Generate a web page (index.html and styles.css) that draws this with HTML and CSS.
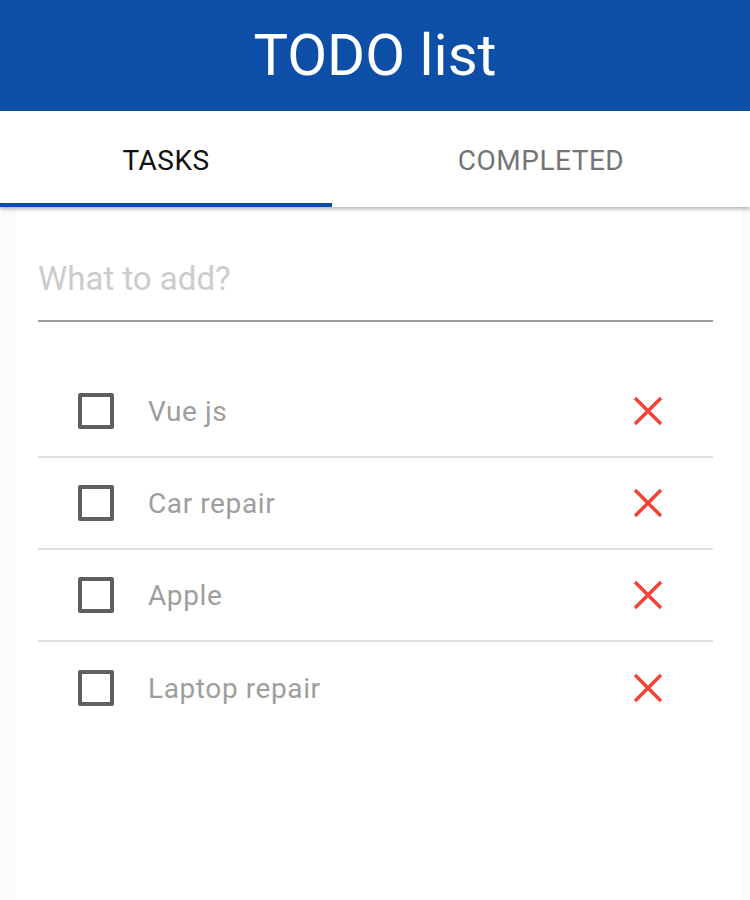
FILE: index.html
```html
<!DOCTYPE html>
<html>
<head>
<meta charset="utf-8">
<link rel="stylesheet" href="styles.css">
</head>
<body>
<header class="header"><h1 class="title">TODO list</h1></header>
<nav class="tabs">
  <div class="tab tab-active">TASKS</div>
  <div class="tab tab-rest">COMPLETED</div>
</nav>
<main class="content">
  <div class="input-wrap"><input class="new-task" type="text" placeholder="What to add?"></div>
  <ul class="list">
    <li class="item"><span class="check"></span><span class="label">Vue js</span><span class="del"><svg viewBox="0 0 32 32" width="32" height="32"><path d="M3 3L29 29M29 3L3 29" stroke="#f44336" stroke-width="3.5" fill="none"/></svg></span></li>
    <li class="item"><span class="check"></span><span class="label">Car repair</span><span class="del"><svg viewBox="0 0 32 32" width="32" height="32"><path d="M3 3L29 29M29 3L3 29" stroke="#f44336" stroke-width="3.5" fill="none"/></svg></span></li>
    <li class="item"><span class="check"></span><span class="label">Apple</span><span class="del"><svg viewBox="0 0 32 32" width="32" height="32"><path d="M3 3L29 29M29 3L3 29" stroke="#f44336" stroke-width="3.5" fill="none"/></svg></span></li>
    <li class="item"><span class="check"></span><span class="label">Laptop repair</span><span class="del"><svg viewBox="0 0 32 32" width="32" height="32"><path d="M3 3L29 29M29 3L3 29" stroke="#f44336" stroke-width="3.5" fill="none"/></svg></span></li>
  </ul>
</main>
</body>
</html>
```
FILE: styles.css
```css
html, body { margin: 0; padding: 0; }
body {
  font-family: Roboto, "Liberation Sans", Arial, sans-serif;
  background: #fbfbfb;
  width: 750px;
  height: 900px;
  overflow: hidden;
}
.header {
  height: 111px;
  background: #0d4ea6;
  display: flex;
  align-items: center;
  justify-content: center;
}
.title {
  margin: 0;
  color: #fff;
  font-weight: 400;
  font-size: 58px;
  line-height: 1;
  padding-bottom: 2px;
}
.tabs {
  height: 96px;
  background: #fff;
  display: flex;
  box-shadow: 0 2px 4px rgba(0,0,0,0.3);
  position: relative;
  z-index: 1;
}
.tab {
  display: flex;
  align-items: center;
  justify-content: center;
  font-size: 28px;
  letter-spacing: 0.5px;
  color: #757575;
  box-sizing: border-box;
  padding-top: 2px;
}
.tab-active {
  width: 332px;
  color: #111;
  border-bottom: 4px solid #0d4ea6;
  padding-top: 6px;
}
.tab-rest { flex: 1; }
.content {
  background: #fff;
  margin: 0 8px 0 15px;
  height: 693px;
  padding: 0 29px 0 23px;
}
.input-wrap {
  padding-top: 38px;
}
.new-task {
  display: block;
  width: 100%;
  box-sizing: border-box;
  border: none;
  border-bottom: 2px solid #9e9e9e;
  outline: none;
  font-family: inherit;
  font-size: 33px;
  height: 77px;
  padding: 0 0 8px 0;
  color: #333;
  background: transparent;
}
.new-task::placeholder { color: #cccccc; }
.list {
  list-style: none;
  margin: 0;
  padding: 0;
  margin-top: 44px;
}
.item {
  height: 92px;
  display: flex;
  align-items: center;
  border-bottom: 2px solid #e0e0e0;
  box-sizing: border-box;
}
.item:last-child { border-bottom: none; }
.check {
  width: 36px;
  height: 36px;
  box-sizing: border-box;
  border: 4px solid #5f5f5f;
  border-radius: 2px;
  margin-left: 40px;
}
.label {
  margin-left: 34px;
  flex: 1;
  font-size: 28px;
  letter-spacing: 0.6px;
  color: #9e9e9e;
}
.del {
  width: 32px;
  height: 32px;
  margin-right: 49px;
  display: flex;
}
```
